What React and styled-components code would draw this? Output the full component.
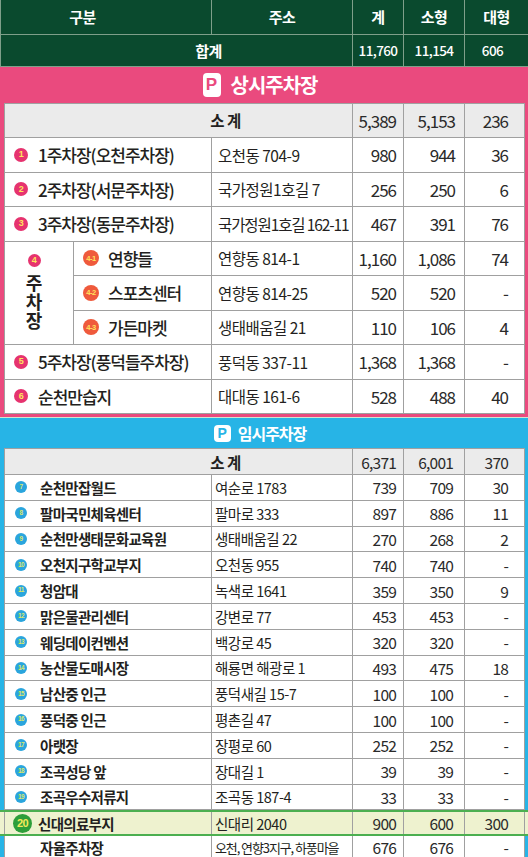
import React from 'react'
import styled, { createGlobalStyle } from 'styled-components'

const GREEN = '#0a4a2e'
const PINK = '#ea4a7e'
const BLUE = '#27b4e6'
const LINE = '#a0a0a0'

const GlobalStyle = createGlobalStyle`
  html, body {
    margin: 0;
    padding: 0;
    background: #ffffff;
  }
  body {
    font-family: "Noto Sans CJK KR", "Noto Sans", sans-serif;
    color: #231f20;
  }
  * {
    box-sizing: border-box;
  }
`

const Page = styled.div`
  width: 528px;
  overflow: hidden;
`

const HeadTable = styled.table`
  width: 528px;
  border-collapse: collapse;
  table-layout: fixed;
  background: ${GREEN};
  color: #ffffff;
`

const HeadRow = styled.tr`
  height: ${(p) => p.$h}px;
`

const HeadCell = styled.td`
  border: 1px solid #7f9f8a;
  border-top: none;
  text-align: center;
  vertical-align: middle;
  font-size: ${(p) => (p.$num ? 13.5 : 15)}px;
  font-weight: ${(p) => (p.$num ? 500 : 700)};
  letter-spacing: ${(p) => (p.$num ? '-0.6px' : '-0.5px')};
  padding: 0 ${(p) => p.$pr || 0}px 0 ${(p) => p.$pl || 0}px;
  white-space: nowrap;
`

const Section = styled.section`
  background: ${(p) => p.$color};
  padding: 0 4px 3px;
`

const SectionTitle = styled.div`
  height: ${(p) => p.$h}px;
  display: flex;
  align-items: center;
  justify-content: center;
  gap: ${(p) => p.$gap}px;
  padding-right: 8px;
  color: #ffffff;
  font-weight: 700;
  font-size: ${(p) => p.$fs}px;
  letter-spacing: -1px;
`

const ParkMark = styled.span`
  display: inline-flex;
  align-items: center;
  justify-content: center;
  width: ${(p) => p.$w}px;
  height: ${(p) => p.$hgt}px;
  border-radius: 4px;
  background: #ffffff;
  color: ${(p) => p.$color};
  font-family: "Liberation Sans", "Noto Sans", sans-serif;
  font-weight: 700;
  font-size: ${(p) => p.$fs}px;
  letter-spacing: 0;
`

const Divider = styled.div`
  height: 1px;
  background: #cfe6cf;
`

const DataTable = styled.table`
  width: 520px;
  border-collapse: collapse;
  table-layout: fixed;
  background: ${(p) => p.$bg || '#ffffff'};
`

const Row = styled.tr`
  height: ${(p) => p.$h}px;
  background: ${(p) => p.$bg || 'transparent'};
`

const Cell = styled.td`
  border: 1px solid ${LINE};
  vertical-align: middle;
  white-space: nowrap;
  overflow: hidden;
  padding: 0;
`

const LabelCell = styled(Cell)`
  text-align: center;
  padding-left: 94px;
  font-size: 15.5px;
  font-weight: 700;
  letter-spacing: -0.5px;
`

const NameCell = styled(Cell)`
  padding-left: ${(p) => p.$pl}px;
  font-size: ${(p) => (p.$big ? 17 : 14.5)}px;
  font-weight: ${(p) => (p.$big ? 500 : 700)};
  letter-spacing: ${(p) => (p.$big ? '-1px' : '-0.7px')};
`

const NameWrap = styled.div`
  display: flex;
  align-items: center;
  gap: ${(p) => p.$gap}px;
`

const AddrCell = styled(Cell)`
  padding-left: ${(p) => (p.$big ? 6 : 3)}px;
  font-size: ${(p) => (p.$small ? 13 : p.$big ? 15.5 : 14.5)}px;
  letter-spacing: ${(p) => (p.$tight ? '-1.1px' : '-0.5px')};
`

const NumCell = styled(Cell)`
  text-align: right;
  padding-right: ${(p) => p.$pr}px;
  font-size: ${(p) => (p.$big ? 17 : 15.5)}px;
  letter-spacing: ${(p) => (p.$big ? '-1px' : '-0.8px')};
  color: #2a2a2a;
`

const GroupCell = styled(Cell)`
  padding-right: 10px;
`

const GroupWrap = styled.div`
  display: flex;
  flex-direction: column;
  align-items: center;
  gap: 7px;
`

const VerticalText = styled.span`
  writing-mode: vertical-rl;
  text-orientation: upright;
  font-size: 18px;
  font-weight: 700;
  letter-spacing: 1px;
  line-height: 1;
`

const Badge = styled.span`
  flex: none;
  display: inline-flex;
  align-items: center;
  justify-content: center;
  width: ${(p) => p.$size}px;
  height: ${(p) => p.$size}px;
  border-radius: 50%;
  background: ${(p) => p.$bg};
  color: ${(p) => p.$fg};
  font-family: "Liberation Sans", "Noto Sans", sans-serif;
  font-size: ${(p) => p.$fs}px;
  font-weight: 700;
  letter-spacing: -0.5px;
  line-height: 1;
`

const HighlightBand = styled.div`
  margin: 0 -4px;
  padding: 0 4px;
  background: #eef2cf;
  border-top: 2px solid #4caf50;
  border-bottom: 2px solid #4caf50;

  td {
    border-top: none;
    border-bottom: none;
  }
`

const LastTable = styled(DataTable)`
  td {
    border-top: none;
  }
`

const PinkCols = () => (
  <colgroup>
    <col style={{ width: 69 }} />
    <col style={{ width: 138 }} />
    <col style={{ width: 141 }} />
    <col style={{ width: 51 }} />
    <col style={{ width: 61 }} />
    <col style={{ width: 60 }} />
  </colgroup>
)

const BlueCols = () => (
  <colgroup>
    <col style={{ width: 207 }} />
    <col style={{ width: 141 }} />
    <col style={{ width: 51 }} />
    <col style={{ width: 61 }} />
    <col style={{ width: 60 }} />
  </colgroup>
)

const permanent = [
  { no: '1', name: '1주차장(오천주차장)', addr: '오천동 704-9', n: ['980', '944', '36'] },
  { no: '2', name: '2주차장(서문주차장)', addr: '국가정원1호길 7', n: ['256', '250', '6'] },
  { no: '3', name: '3주차장(동문주차장)', addr: '국가정원1호길 162-11', n: ['467', '391', '76'], tight: true },
]

const group4 = [
  { no: '4-1', name: '연향들', addr: '연향동 814-1', n: ['1,160', '1,086', '74'] },
  { no: '4-2', name: '스포츠센터', addr: '연향동 814-25', n: ['520', '520', '-'] },
  { no: '4-3', name: '가든마켓', addr: '생태배움길 21', n: ['110', '106', '4'] },
]

const permanentTail = [
  { no: '5', name: '5주차장(풍덕들주차장)', addr: '풍덕동 337-11', n: ['1,368', '1,368', '-'] },
  { no: '6', name: '순천만습지', addr: '대대동 161-6', n: ['528', '488', '40'] },
]

const temporary = [
  { no: '7', name: '순천만잡월드', addr: '여순로 1783', n: ['739', '709', '30'] },
  { no: '8', name: '팔마국민체육센터', addr: '팔마로 333', n: ['897', '886', '11'] },
  { no: '9', name: '순천만생태문화교육원', addr: '생태배움길 22', n: ['270', '268', '2'] },
  { no: '10', name: '오천지구학교부지', addr: '오천동 955', n: ['740', '740', '-'] },
  { no: '11', name: '청암대', addr: '녹색로 1641', n: ['359', '350', '9'] },
  { no: '12', name: '맑은물관리센터', addr: '강변로 77', n: ['453', '453', '-'] },
  { no: '13', name: '웨딩데이컨벤션', addr: '백강로 45', n: ['320', '320', '-'] },
  { no: '14', name: '농산물도매시장', addr: '해룡면 해광로 1', n: ['493', '475', '18'] },
  { no: '15', name: '남산중 인근', addr: '풍덕새길 15-7', n: ['100', '100', '-'] },
  { no: '16', name: '풍덕중 인근', addr: '평촌길 47', n: ['100', '100', '-'] },
  { no: '17', name: '아랫장', addr: '장평로 60', n: ['252', '252', '-'] },
  { no: '18', name: '조곡성당 앞', addr: '장대길 1', n: ['39', '39', '-'] },
  { no: '19', name: '조곡우수저류지', addr: '조곡동 187-4', n: ['33', '33', '-'] },
]

const Numbers = ({ n, big }) => (
  <>
    <NumCell $big={big} $pr={7}>{n[0]}</NumCell>
    <NumCell $big={big} $pr={big ? 9 : 11}>{n[1]}</NumCell>
    <NumCell $big={big} $pr={16}>{n[2]}</NumCell>
  </>
)

const PinkRow = ({ item }) => (
  <Row $h={34.5}>
    <NameCell colSpan={2} $big $pl={9}>
      <NameWrap $gap={10}>
        <Badge $size={14} $bg="#e6336f" $fg="#ffe45c" $fs={9}>{item.no}</Badge>
        {item.name}
      </NameWrap>
    </NameCell>
    <AddrCell $big $tight={item.tight}>{item.addr}</AddrCell>
    <Numbers n={item.n} big />
  </Row>
)

const BlueRow = ({ item }) => (
  <Row $h={25.8}>
    <NameCell $pl={10}>
      <NameWrap $gap={13}>
        <Badge $size={12} $bg="#2aa5dd" $fg="#d9e86a" $fs={6.5}>{item.no}</Badge>
        {item.name}
      </NameWrap>
    </NameCell>
    <AddrCell>{item.addr}</AddrCell>
    <Numbers n={item.n} />
  </Row>
)

export default function App() {
  return (
    <Page>
      <GlobalStyle />
      <HeadTable>
        <colgroup>
          <col style={{ width: 211 }} />
          <col style={{ width: 141 }} />
          <col style={{ width: 51 }} />
          <col style={{ width: 61 }} />
          <col style={{ width: 64 }} />
        </colgroup>
        <tbody>
          <HeadRow $h={34}>
            <HeadCell $pr={47}>구분</HeadCell>
            <HeadCell>주소</HeadCell>
            <HeadCell>계</HeadCell>
            <HeadCell>소형</HeadCell>
            <HeadCell>대형</HeadCell>
          </HeadRow>
          <HeadRow $h={32}>
            <HeadCell colSpan={2} $pl={64}>합계</HeadCell>
            <HeadCell $num>11,760</HeadCell>
            <HeadCell $num>11,154</HeadCell>
            <HeadCell $num $pr={8}>606</HeadCell>
          </HeadRow>
        </tbody>
      </HeadTable>

      <Section $color={PINK}>
        <SectionTitle $h={36} $gap={10} $fs={20}>
          <ParkMark $w={18} $hgt={24} $fs={17} $color={PINK}>P</ParkMark>
          상시주차장
        </SectionTitle>
        <DataTable>
          <PinkCols />
          <tbody>
            <Row $h={34.5} $bg="#ebebeb">
              <LabelCell colSpan={3}>소 계</LabelCell>
              <Numbers n={['5,389', '5,153', '236']} big />
            </Row>
            {permanent.map((item) => (
              <PinkRow key={item.no} item={item} />
            ))}
            {group4.map((item, i) => (
              <Row key={item.no} $h={34.5}>
                {i === 0 && (
                  <GroupCell rowSpan={3}>
                    <GroupWrap>
                      <Badge $size={13} $bg="#e6336f" $fg="#ffe45c" $fs={9}>4</Badge>
                      <VerticalText>주차장</VerticalText>
                    </GroupWrap>
                  </GroupCell>
                )}
                <NameCell $big $pl={9}>
                  <NameWrap $gap={9}>
                    <Badge $size={16} $bg="#ef5a3c" $fg="#ffe45c" $fs={7.5}>{item.no}</Badge>
                    {item.name}
                  </NameWrap>
                </NameCell>
                <AddrCell $big>{item.addr}</AddrCell>
                <Numbers n={item.n} big />
              </Row>
            ))}
            {permanentTail.map((item) => (
              <PinkRow key={item.no} item={item} />
            ))}
          </tbody>
        </DataTable>
      </Section>

      <Divider />

      <Section $color={BLUE}>
        <SectionTitle $h={30} $gap={7} $fs={16}>
          <ParkMark $w={17} $hgt={17} $fs={14} $color={BLUE}>P</ParkMark>
          임시주차장
        </SectionTitle>
        <DataTable>
          <BlueCols />
          <tbody>
            <Row $h={26} $bg="#ebebeb">
              <LabelCell colSpan={2}>소 계</LabelCell>
              <Numbers n={['6,371', '6,001', '370']} />
            </Row>
            {temporary.map((item) => (
              <BlueRow key={item.no} item={item} />
            ))}
          </tbody>
        </DataTable>
        <HighlightBand>
          <DataTable $bg="transparent">
            <BlueCols />
            <tbody>
              <Row $h={22}>
                <NameCell $pl={8}>
                  <NameWrap $gap={6}>
                    <Badge $size={19} $bg="#2e9e3a" $fg="#f3ea5c" $fs={11}>20</Badge>
                    신대의료부지
                  </NameWrap>
                </NameCell>
                <AddrCell>신대리 2040</AddrCell>
                <Numbers n={['900', '600', '300']} />
              </Row>
            </tbody>
          </DataTable>
        </HighlightBand>
        <LastTable>
          <BlueCols />
          <tbody>
            <Row $h={21}>
              <NameCell $pl={35}>자율주차장</NameCell>
              <AddrCell $small $tight>오천, 연향3지구, 하풍마을</AddrCell>
              <Numbers n={['676', '676', '-']} />
            </Row>
          </tbody>
        </LastTable>
      </Section>
    </Page>
  )
}
